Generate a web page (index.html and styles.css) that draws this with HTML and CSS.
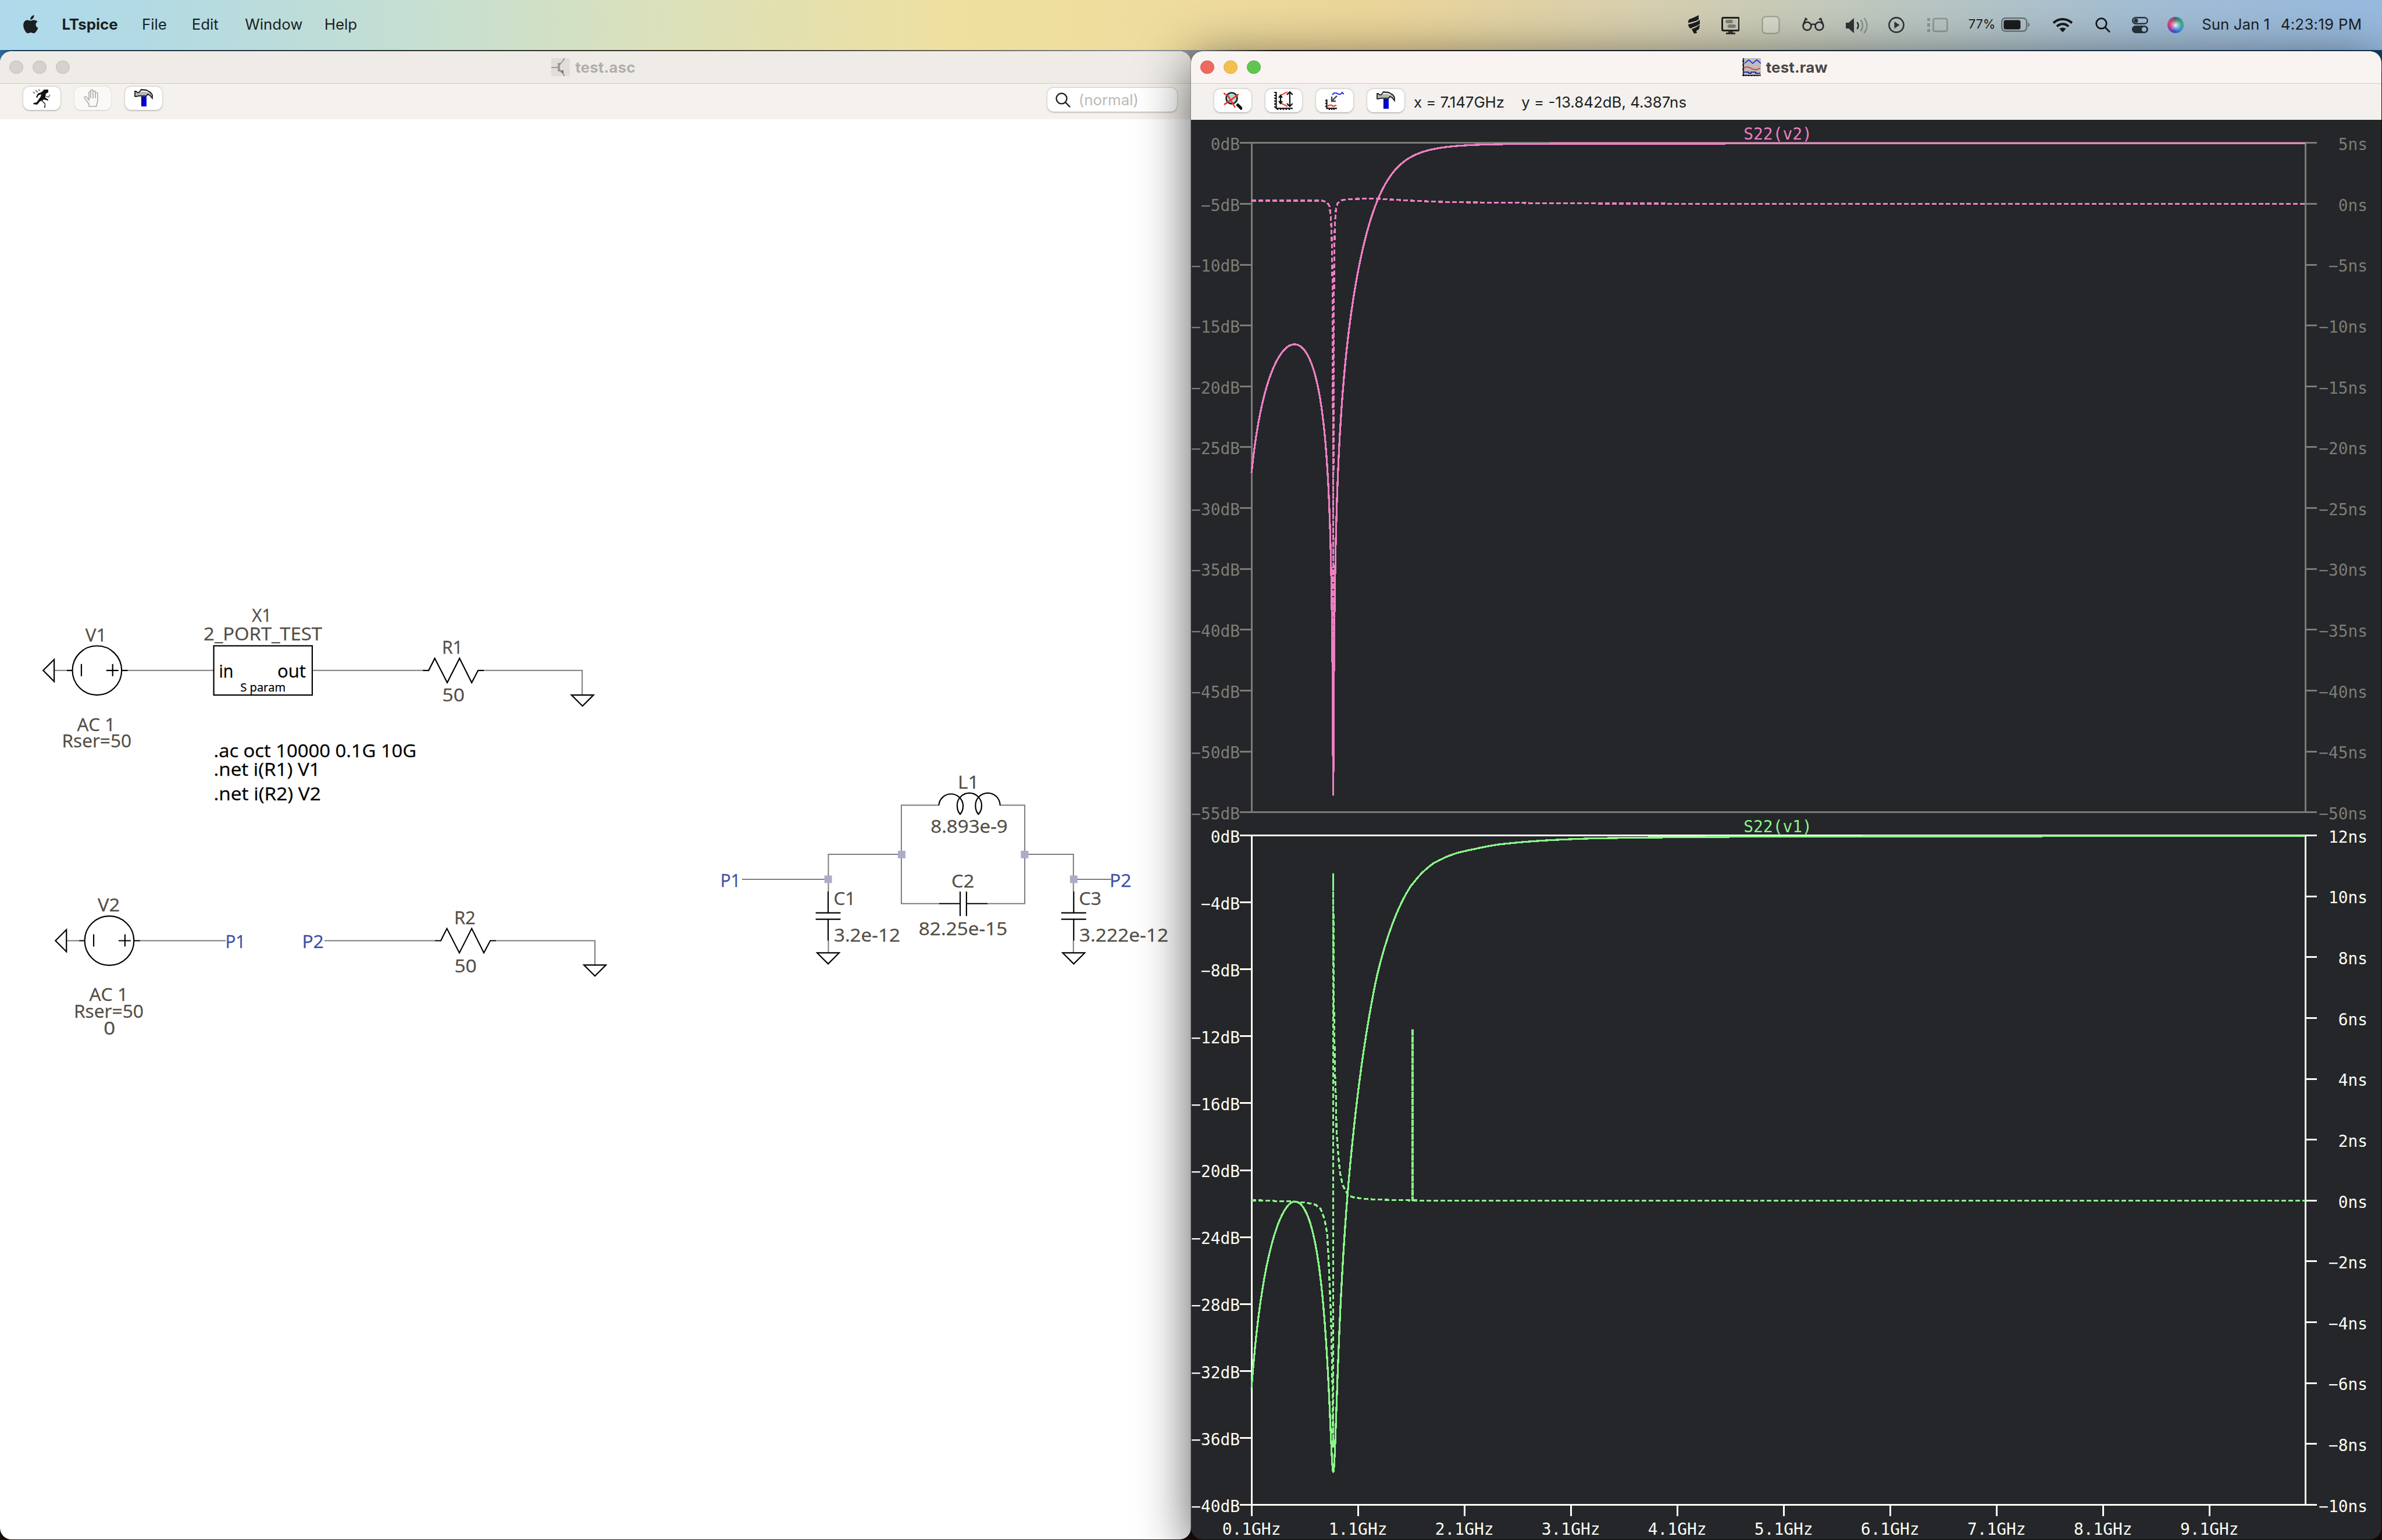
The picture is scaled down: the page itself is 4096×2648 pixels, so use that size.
FILE: index.html
```html
<!DOCTYPE html>
<html lang="en">
<head>
<meta charset="utf-8">
<title>LTspice</title>
<link rel="stylesheet" href="styles.css">
</head>
<body>
<div class="screen">
  <header class="menubar">
    <nav class="menus">
      <svg class="apple" viewBox="0 0 26 32"><path d="M18.6 0c.3 2.400-.7 4.400-2 5.800-1.300 1.500-3 2.300-4.400 2.100-.2-2.200.7-4.200 1.900-5.500C15.400 1 17.200.1 18.600 0zM24.800 11c-2 1.200-3.200 2.900-3.200 5.200 0 2.700 1.600 4.700 4 5.600-.6 1.900-1.600 3.900-2.900 5.800-1.300 1.900-2.600 3.700-4.700 3.700-2 0-2.600-1.200-4.900-1.200-2.300 0-3 1.200-4.900 1.300-2 .1-3.500-2-4.800-3.900C.6 23.400-1.200 16.600 1.300 12.200c1.300-2.200 3.500-3.600 6-3.600 2 0 3.700 1.300 5 1.300 1.200 0 3.300-1.500 5.900-1.300 2.600.1 4.900 1.100 6.600 2.400z"/></svg>
      <span class="m m-app">LTspice</span><span class="m m-file">File</span><span class="m m-edit">Edit</span><span class="m m-window">Window</span><span class="m m-help">Help</span>
    </nav>
    <div class="status">
      <svg class="s-flag" viewBox="0 0 26 32"><path fill="#1b1c1e" d="M4 7C10 5 15 3 20 0v7.500C15 10.500 10 11.500 2 13.500c0-2 0-5 2-6.500zM2 16c8-2 15-4 20-8v7c-4 4-11 5-16 8-2-1-4-4-4-7zM8 24c6-2 10-4 14-7.500l-1 6.500c-1 3-4 3-5 4l1 4-5 1c-1-3-3-5-4-8z"/></svg>
      <svg class="s-monitor" viewBox="0 0 32 30"><rect x="1.500" y="1.500" width="29" height="22" rx="2" fill="none" stroke="#222" stroke-width="3"/><rect x="7" y="5" width="14" height="6" rx="3" fill="#7d7f76"/><rect x="19" y="5" width="6" height="6" rx="3" fill="#bfc1b5"/><rect x="7" y="13" width="6" height="6" rx="3" fill="#bfc1b5"/><rect x="11" y="13" width="14" height="6" rx="3" fill="#7d7f76"/><path d="M12 24h8v3h4v3H8v-3h4z" fill="#333"/></svg>
      <svg class="s-box" viewBox="0 0 32 32"><rect x="1.500" y="1.500" width="29" height="29" rx="6" fill="#fff" fill-opacity=".25" stroke="#000" stroke-opacity=".25" stroke-width="2"/></svg>
      <svg class="s-glasses" viewBox="0 0 38 24" fill="none" stroke="#2a2d2e" stroke-width="2.600"><circle cx="8.500" cy="15" r="7"/><circle cx="29.500" cy="15" r="7"/><path d="M15 13c2-2 6-2 8 0M2 12 6 2l3 2M36 12 32 2l-3 2"/></svg>
      <svg class="s-volume" viewBox="0 0 40 28" fill="none" stroke-width="2.600" stroke-linecap="round"><path d="M1 9h5l9-8v26l-9-8H1z" fill="#2f3334"/><path d="M21 9c2 3 2 7 0 10" stroke="#2f3334"/><path d="M27 5c4 5 4 13 0 18M33 2c6 7 6 17 0 24" stroke="#2f3334" stroke-opacity=".35"/></svg>
      <svg class="s-play" viewBox="0 0 28 28"><circle cx="14" cy="14" r="12.600" fill="none" stroke="#2f3436" stroke-width="2.600"/><path d="M10.500 8v12l9-6z" fill="#2f3436"/></svg>
      <svg class="s-stage" viewBox="0 0 36 26" opacity=".28"><rect x="10.500" y="2" width="24" height="22" rx="3" fill="none" stroke="#222" stroke-width="2.600"/><path d="M0 1h5v5H0zM0 10h5v6H0zM0 20h5v5H0z" fill="#222"/></svg>
      <span class="percent">77%</span>
      <svg class="s-battery" viewBox="0 0 50 26"><rect x="1.200" y="1.200" width="43" height="22.600" rx="6.500" fill="none" stroke="#1b1c1e" stroke-opacity=".5" stroke-width="2.200"/><rect x="4.500" y="4.500" width="29" height="16" rx="3.500" fill="#1b1c1e"/><path d="M46.500 8.500c3.500 1.300 3.500 6.700 0 8z" fill="#1b1c1e" fill-opacity=".5"/></svg>
      <svg class="s-wifi" viewBox="0 0 36 26" fill="none" stroke="#15181a" stroke-width="4"><path d="M2 9.500C11 .8 25 .8 34 9.500M8 15.500c6-5.500 14-5.500 20 0"/><path d="M18 25.500l-5.500-6c3-2.700 8-2.700 11 0z" fill="#15181a" stroke="none"/></svg>
      <svg class="s-search" viewBox="0 0 26 26" fill="none" stroke="#15181a" stroke-width="2.800" stroke-linecap="round"><circle cx="10.500" cy="10.500" r="8.800"/><path d="M17 17l7.200 7.500"/></svg>
      <svg class="s-control" viewBox="0 0 28 28"><rect x="1.200" y="1.200" width="25.600" height="10.600" rx="5.300" fill="none" stroke="#27323a" stroke-width="2.400"/><circle cx="7" cy="6.500" r="3.600" fill="#27323a"/><rect y="15" width="28" height="13" rx="6.500" fill="#27323a"/><circle cx="21" cy="21.500" r="4" fill="#a5bfd6"/></svg>
      <span class="siri"></span>
      <span class="date">Sun Jan 1</span><span class="clock">4:23:19 PM</span>
    </div>
  </header>
  <main class="desktop">
    <section class="window schematic">
      <div class="titlebar">
        <div class="lights"><i></i><i></i><i></i></div>
        <div class="title">
          <svg class="doc" viewBox="0 0 32 32"><path fill="#e0ddda" d="M0 0h32v32H0z"/><path d="M0 16h12M12 9v13h2V9zM14 12l8-10V0M14 19l8 10v3" fill="none" stroke="#8a8885" stroke-width="1.500"/><path fill="#777" d="M15 23l6-3v7z"/></svg>
          <span>test.asc</span>
        </div>
      </div>
      <div class="toolbar">
        <button class="tool"><svg viewBox="0 0 32 32"><path d="M20 1h7v5l-4 2-1 7 5 3v2l-8-2-3 3 5 5-1 6h2v-7l-5-5-4 1-5 6-7-1 1-2 5-1 7-10 1-4-5 2-2 4-2-1 3-6 7-3z" fill="#111"/><path d="M23 13l5 1 2-4M1 5l3 3M5 2l4 4M10 1l3 2" fill="none" stroke="#777" stroke-width="1.800"/></svg></button>
        <button class="tool off"><svg viewBox="0 0 32 32" fill="none" stroke="#b5b4b2" stroke-width="1.800"><path d="M10 30v-4l-8-11c0-2 3-3 5 0l3 4V6c0-2 3-2 3 0V3c0-2 4-2 4 0v2c0-2 4-2 4 0v3c0-2 4-2 4 0v14l-2 5v3zM13 6v10M17 5v11M21 8v8"/></svg></button>
        <button class="tool"><svg viewBox="0 0 32 32"><path d="M12 13h9v17h-9z" fill="#00d"/><path d="M12 13h3v9h-1v8h-2z" fill="#009"/><path d="M1 4h2l2 2h3l4-5 9 1 7 4 3 4v6l-4-5-4-2-2 3h-9L7 12l-3 1H1z" fill="#b5b5b5" stroke="#1a1a1a" stroke-width="1.800"/><path d="M11 4h9l4 2" stroke="#eee" stroke-width="2" fill="none"/></svg></button>
        <div class="find"><svg viewBox="0 0 26 26" fill="none" stroke="#222" stroke-width="2.400" stroke-linecap="round"><circle cx="10.500" cy="10.500" r="9"/><path d="M17 17l7.500 7.500"/></svg><span>(normal)</span></div>
      </div>
      <svg class="canvas" id="sheet" viewBox="0 206 2056 2451"></svg>
    </section>
    <section class="window waveform">
      <div class="titlebar">
        <div class="lights on"><i></i><i></i><i></i></div>
        <div class="title">
          <svg class="doc" viewBox="0 0 32 32" fill="none"><path fill="#bdbdbd" d="M0 0h32v32H0z"/><path d="M2 0v32M0 29.500h32M0 5h2M0 12h2M0 19h2M6 29v3M11 29v3M16 29v3M21 29v3M26 29v3" stroke="#000" stroke-width="1.500"/><path d="M4 9l7-6 7 6 7-6 7 6" stroke="#11e" stroke-width="1.500"/><path d="M3 17l4-2 5 1 6 3 7 1 6-3" stroke="#e21" stroke-width="1.500"/><path d="M3 24h8v2h4v-2h8v2h8" stroke="#009" stroke-width="1.500"/></svg>
          <span>test.raw</span>
        </div>
      </div>
      <div class="toolbar">
        <button class="tool"><svg viewBox="0 0 32 32"><circle cx="14" cy="12" r="9.500" fill="#9be4e8" stroke="#222" stroke-width="2.600"/><path d="M15 5l6 5-8 9-5-4z" fill="#c9c9c9"/><path d="M23 22l9 9" stroke="#111" stroke-width="5"/><path d="M0 3l8 5 12 20M26 5L14 14 1 23" stroke="#ee3224" stroke-width="2.600" fill="none"/></svg></button>
        <button class="tool"><svg viewBox="0 0 32 32" fill="none"><path d="M3.500 1v28.500H32M0 2h3M0 7h3M0 12h3M0 17h3M0 22h3M0 27h3M6 29v4M11 29v4M16 29v4M21 29v4M26 29v4" stroke="#111" stroke-width="2.200"/><path d="M11 7l12-6M11 20l12 6" stroke="#f04a35" stroke-width="2.200"/><path d="M11 8v12M8 11l3-4 3 4M8 17l3 4 3-4M27 1v25M22 6l5-5 5 5M22 21l5 5 5-5" stroke="#111" stroke-width="2.200"/></svg></button>
        <button class="tool"><svg viewBox="0 0 32 32" fill="none"><path d="M12 6l3-3h4l4 2h3l3-3 3 3" stroke="#3333f5" stroke-width="2.200"/><path d="M20 8l-9 9M11 9v8h7" stroke="#444" stroke-width="2.400"/><path d="M2.500 14v15.500H20M0 16h3M0 21h3M0 26h3M7 29v3M11 29v3M15 29v3" stroke="#111" stroke-width="2.200"/><path d="M3 26l4-2h4l3 2 5-2" stroke="#f04a35" stroke-width="2.400"/></svg></button>
        <button class="tool"><svg viewBox="0 0 32 32"><path d="M12 13h9v17h-9z" fill="#00d"/><path d="M12 13h3v9h-1v8h-2z" fill="#009"/><path d="M1 4h2l2 2h3l4-5 9 1 7 4 3 4v6l-4-5-4-2-2 3h-9L7 12l-3 1H1z" fill="#b5b5b5" stroke="#1a1a1a" stroke-width="1.800"/><path d="M11 4h9l4 2" stroke="#eee" stroke-width="2" fill="none"/></svg></button>
        <span class="read-x">x = 7.147GHz</span><span class="read-y">y = -13.842dB, 4.387ns</span>
      </div>
      <svg class="canvas" id="plots" viewBox="2056 207 2055 2450"></svg>
    </section>
  </main>
</div>
<script src="script.js"></script>
</body>
</html>
```
FILE: styles.css
```css
* { box-sizing: border-box; }
html, body { margin: 0; height: 100%; overflow: hidden; background: #10131a; }
.screen {
  width: 4112px; height: 2658px; zoom: 0.99611;
  display: flex; flex-direction: column; overflow: hidden;
  font-family: Inter, "Liberation Sans", sans-serif; font-size: 26px; color: #1b1f22;
  background: linear-gradient(180deg, #0b1420 0, #0b1420 2500px, #1a0e0a 2658px);
}
.screen svg { display: block; flex: none; }
.screen span { white-space: nowrap; }

/* menu bar */
.menubar {
  height: 86px; flex: none; display: flex; justify-content: space-between; align-items: flex-start;
  background: linear-gradient(90deg, #aedaec 0, #b2dae4 240px, #c6dfd1 740px, #dae1bb 1130px, #efe0a0 1650px, #efdf9f 1800px, #ebd59a 2400px, #d6cfb0 2860px, #b6c5c4 3360px, #a3bdd4 3700px, #97b9de 4112px);
}
.menus, .status { display: flex; align-items: flex-start; line-height: 32px; padding-top: 26px; }
.menus { padding-left: 40px; }
.apple { width: 26px; height: 32px; margin-right: 41px; fill: #1b1f22; }
.m { flex: none; }
.m-app { width: 138px; font-weight: 700; }
.m-file { width: 86px; }
.m-edit { width: 92px; }
.m-window { width: 137px; }
.s-flag { width: 26px; height: 32px; margin-right: 33px; }
.s-monitor { width: 32px; height: 30px; margin: 3px 38px 0 0; }
.s-box { width: 32px; height: 32px; margin: 1px 38px 0 0; }
.s-glasses { width: 38px; height: 24px; margin: 4px 36px 0 0; }
.s-volume { width: 40px; height: 28px; margin: 4px 35px 0 0; }
.s-play { width: 28px; height: 28px; margin: 3px 39px 0 0; }
.s-stage { width: 36px; height: 26px; margin: 4px 35px 0 0; }
.percent { width: 56px; font-size: 22px; letter-spacing: -.2px; }
.s-battery { width: 50px; height: 26px; margin: 4px 39px 0 0; }
.s-wifi { width: 36px; height: 26px; margin: 4px 38px 0 0; }
.s-search { width: 26px; height: 26px; margin: 4px 37px 0 0; }
.s-control { width: 28px; height: 28px; margin: 3px 34px 0 0; }
.siri {
  width: 28px; height: 28px; margin: 3px 31px 0 0; border-radius: 50%; flex: none;
  background: radial-gradient(circle at 50% 52%, #fff 0, rgba(255,255,255,.5) 22%, transparent 50%),
    conic-gradient(#3a7a78, #3bb08a 70deg, #3f9be0 130deg, #2c5fd0 190deg, #b03ab0 240deg, #e2457a 290deg, #6b5a72);
}
.date { width: 136px; }
.clock { width: 175px; letter-spacing: .25px; }

/* windows */
.desktop { flex: 1; display: flex; padding-top: 2px; min-height: 0; background: linear-gradient(90deg, #2f6a9a 0, #16324c 30px, #3a3020 1200px, #8f9499 2040px, #8f9499 2070px, #1b1b1b 2200px, #14406c 4112px); background-size: 100% 40px; background-repeat: no-repeat; }
.window { display: flex; flex-direction: column; height: 2569px; border-radius: 20px; overflow: hidden; position: relative; }
.schematic { width: 2056px; background: #fff; }
.waveform { width: 2055px; background: #242629; box-shadow: 0 20px 90px rgba(0,0,0,.65), 0 0 2px rgba(0,0,0,.6); }
.titlebar { height: 57px; flex: none; display: flex; align-items: center; border-bottom: 2px solid #cfccc9; background: #efece7; position: relative; }
.waveform .titlebar { background: #f9f4f1; }
.lights { display: flex; gap: 16px; padding-left: 16px; flex: 1; }
.lights i { width: 24px; height: 24px; border-radius: 50%; background: #d5d1cd; border: 1.500px solid #c1bdb9; }
.lights.on i:nth-child(1) { background: #ed6a5e; border-color: #d9574c; }
.lights.on i:nth-child(2) { background: #f5bf4f; border-color: #dfa63e; }
.lights.on i:nth-child(3) { background: #61c554; border-color: #4fae43; }
.title { display: flex; align-items: center; gap: 9px; font-weight: 700; color: #b1aeab; line-height: 32px; letter-spacing: .2px; }
.schematic .title { width: 1104px; }
.waveform .title { width: 1103.500px; color: #4a4745; }
.doc { width: 32px; height: 32px; }
.toolbar { height: 61px; flex: none; display: flex; align-items: flex-start; padding: 5px 0 0 40px; background: #f5f2ed; }
.waveform .toolbar { height: 62px; padding-top: 9px; background: #f3f0ed; }
.tool { width: 64px; height: 40px; margin: 0 24px 0 0; padding: 4px 16px; border: 0; border-radius: 11px; background: #fff; box-shadow: 0 1px 3px rgba(0,0,0,.35); flex: none; }
.tool svg { width: 32px; height: 32px; }
.tool.off { background: #faf9f7; box-shadow: 0 1px 3px rgba(0,0,0,.15); }
.find { width: 224px; height: 41px; margin: 2px 24px 0 auto; border-radius: 11px; background: #fff; box-shadow: 0 1px 3px rgba(0,0,0,.35); display: flex; align-items: center; padding-left: 14px; gap: 14px; color: #bcbab8; }
.find svg { width: 26px; height: 26px; }
.read-x { width: 186px; margin-left: -7.500px; line-height: 46px; letter-spacing: -.1px; }
.read-y { line-height: 46px; }
.canvas { width: 100%; flex: 1 1 0 !important; min-height: 0; }

/* schematic sheet */
.wire { fill: none; stroke: #7d7d7d; stroke-width: 2; }
.part { fill: none; stroke: #000; stroke-width: 2.200; }
.node { fill: #aaacc8; }
.label { font: 31px "Open Sans", "Noto Sans", sans-serif; fill: #524d45; stroke: #524d45; stroke-width: .3; }
.net { fill: #3c4ea6; stroke: #3c4ea6; }
.directive { fill: #000; stroke: #000; }
.small { font-size: 20px; }

/* plots */
.axis { fill: none; stroke-width: 3; shape-rendering: crispEdges; }
.trace { fill: none; stroke-width: 3.300; shape-rendering: crispEdges; stroke-linejoin: round; }
.dash { stroke-dasharray: 8 4; }
.spike { stroke-dasharray: 11 1; }
.tick { font: 28px "DejaVu Sans Mono", monospace; }
```
FILE: script.js
```js
const make = (host, tag, attrs, text) => {
  const el = document.createElementNS('http://www.w3.org/2000/svg', tag);
  for (const k in attrs) el.setAttribute(k, attrs[k]);
  if (text !== undefined) el.textContent = text;
  host.appendChild(el);
  return el;
};

/* ---- schematic ---- */
const sheet = document.getElementById('sheet');
const wire = d => make(sheet, 'path', { class: 'wire', d });
const part = d => make(sheet, 'path', { class: 'part', d });

wire('M94 1157.500H116M220 1157.500H369M540 1157.500H730M835 1157.500H1005V1200');
wire('M115 1624H137M241 1624H390M560 1624H751M856 1624H1027V1666');
wire('M1281 1518H1430M1430 1539V1475H1556M1621 1390H1556V1560H1621M1705 1560H1769V1390H1726M1769 1475H1853V1539M1853 1518H1918M1430 1624V1645M1853 1624V1645');

/* voltage source with its ground, centred on the circle */
const source = (x, y) => {
  part(`M${x - 93} ${y}l19 -19v38zM${x - 52} ${y}h10M${x + 42} ${y}h11M${x - 27} ${y - 11}v21M${x + 27} ${y - 11}v21M${x + 16} ${y}h21`);
  make(sheet, 'circle', { class: 'part', cx: x, cy: y, r: 42.5 });
};
source(167.5, 1157.5); source(188.7, 1624);
const resistor = (x, y) => part(`M${x} ${y}h10l10.500 -21l21.500 42l21.300 -42l21 42l11 -21h10`);
resistor(730, 1157.5); resistor(751, 1624);
const ground = (x, y) => part(`M${x - 19} ${y}h38l-19 19z`);
ground(1005.5, 1200); ground(1027, 1666); ground(1429.6, 1645); ground(1853.5, 1645);
const capacitor = x => part(`M${x} 1539V1576M${x - 21.5} 1576h43M${x - 21.500} 1587h43M${x} 1587V1624`);
capacitor(1429.6); capacitor(1853.5);
part('M1621 1560H1657.500M1657.500 1539.300V1581.700M1668.400 1539.300V1581.700M1668.400 1560H1705');
part('M1620.700 1390.300A21 21 0 0 1 1662.600 1390.300Q1662.600 1400 1657.500 1405.700Q1652.300 1400 1652.300 1390.300A21 21 0 0 1 1694.600 1390.300Q1694.600 1400 1689 1405.700Q1683.900 1400 1683.900 1390.300A21.200 21.200 0 0 1 1726.400 1390.300');
make(sheet, 'rect', { class: 'part', x: 369, y: 1115, width: 170, height: 85 });
for (const [x, y] of [[1429.6, 1518], [1556.5, 1475.3], [1768.8, 1475.3], [1853.5, 1518]])
  make(sheet, 'rect', { class: 'node', x: x - 6.5, y: y - 6.5, width: 13, height: 13 });

/* text, left edge, right edge, baseline, extra class */
const labels = [
  ['V1', 147.4, 184, 1107.7], ['X1', 435, 469, 1073.7], ['2_PORT_TEST', 351.5, 556, 1106],
  ['R1', 763, 799, 1128.7], ['50', 763.5, 802, 1211], ['AC 1', 133, 199, 1261.7], ['Rser=50', 107, 227, 1290.7],
  ['.ac oct 10000 0.1G 10G', 369, 719, 1307.7, 'directive'], ['.net i(R1) V1', 369, 553, 1339.3, 'directive'],
  ['.net i(R2) V2', 369, 554, 1381.7, 'directive'], ['in', 378, 403, 1169.5, 'directive'], ['out', 479, 528, 1169.5, 'directive'],
  ['S param', 415, 493, 1194.3, 'directive small'],
  ['V2', 168.7, 207, 1573.7], ['P1', 389, 424, 1636.7, 'net'], ['P2', 521.5, 559, 1636.7, 'net'],
  ['R2', 784, 821, 1595], ['50', 784.5, 823, 1678.3], ['AC 1', 154, 221, 1728], ['Rser=50', 127.5, 248, 1756.7], ['0', 179, 199, 1786],
  ['P1', 1243.5, 1278.5, 1530.7, 'net'], ['P2', 1915.5, 1953, 1530.7, 'net'], ['L1', 1653.5, 1690, 1361.7],
  ['8.893e-9', 1606.5, 1739.5, 1437.7], ['C2', 1642.5, 1682, 1531.7], ['82.25e-15', 1586, 1739, 1614],
  ['C1', 1439, 1477, 1562], ['3.2e-12', 1439.5, 1554, 1626], ['C3', 1862.5, 1901.5, 1562], ['3.222e-12', 1863, 2017, 1626]
];
for (const [t, a, b, y, c] of labels)
  make(sheet, 'text', { class: 'label ' + (c || ''), x: a, y, textLength: b - a, lengthAdjust: 'spacingAndGlyphs' }, t);

/* ---- waveforms ---- */
const plots = document.getElementById('plots');
const X0 = 2160.5, X1 = 3979.5, GHZ = (X1 - X0) / 9.9;
const fx = f => X0 + (f - 0.1) * GHZ;

const pane = (top, bottom, color, left, right, title, titleColor) => {
  make(plots, 'path', { class: 'axis', stroke: color, d: `M${X0} ${top}V${bottom}M${X1} ${top}V${bottom}M2140 ${top}H4000M2140 ${bottom}H4000` });
  const put = (list, x1, x2, tx) => list.forEach((t, i) => {
    const y = top + (bottom - top) * i / (list.length - 1);
    make(plots, 'path', { class: 'axis', stroke: color, d: `M${x1} ${y}H${x2}` });
    make(plots, 'text', { class: 'tick', fill: color, x: tx, y: y + 12.300, 'text-anchor': 'end' }, t);
  });
  put(left, 2140, X0, 2140.5);
  put(right, X1, 4000, 4087);
  make(plots, 'text', { class: 'tick', fill: titleColor, x: 3069, y: top - 6, 'text-anchor': 'middle' }, title);
};
const range = (a, b, s, u) => { const r = []; for (let v = a; v >= b; v -= s) r.push((v < 0 ? '−' + -v : v) + u); return r; };
const PINK = '#ee7fc3', GREEN = '#8af78a', GREY = '#7b7c78', WHITE = '#fdfdf6';
pane(247, 1402.4, GREY, range(0, -55, 5, 'dB'), range(5, -50, 5, 'ns'), 'S22(v2)', PINK);
pane(1442.4, 2597.8, WHITE, range(0, -40, 4, 'dB'), range(12, -10, 2, 'ns'), 'S22(v1)', GREEN);
for (let i = 0; i < 10; i++) {
  const x = fx(0.1 + i);
  make(plots, 'path', { class: 'axis', stroke: WHITE, d: `M${x} 2598V2617.500` });
  make(plots, 'text', { class: 'tick', fill: WHITE, x, y: 2650, 'text-anchor': 'middle' }, i + '.1GHz');
}

/* reflection of the C1 / L1||C2 / C3 ladder between 50 ohm ports */
const numer = f => {
  const w = 2 * Math.PI * f * 1e9, L = 8.893e-9 / (1 - w * w * 8.893e-9 * 82.25e-15);
  return Math.abs(w * L / 50 - 50 * w * (6.422e-12 - w * w * L * 3.2e-12 * 3.222e-12));
};
const lerp = (t, x) => {
  let i = 1;
  while (i < t.length - 1 && t[i][0] < x) i++;
  const [a, p] = t[i - 1], [b, q] = t[i];
  return p + (q - p) * Math.min(1, Math.max(0, (x - a) / (b - a)));
};
const db = (n, floor) => 10 * Math.log10((n * n + floor * floor) / (4 + n * n));
const K = [[.1, .505], [.47, .535], [1.056, .55], [1.28, .585], [1.612, .541]];
const TAIL = [[1.612, 2.874], [1.698, 2.225], [1.807, 1.638], [1.928, 1.252], [2.025, 1.02], [2.196, .773], [2.414, .51], [2.657, .355], [2.9, .247], [3.308, .139], [4.1, .07], [5, .03], [7, .01], [10, .005]].map(([f, d]) => [f, Math.log(d)]);
const draw = (pts, color, cls) => make(plots, 'polyline', { class: 'trace ' + (cls || ''), stroke: color, points: pts.map(p => p.map(v => v.toFixed(2)).join()).join(' ') });
const pink = [], green = [];
for (let f = 0.1; f <= 10; f += f < 2 ? 0.002 : 0.01) {
  pink.push([fx(f), 248 - db(numer(f), .0042) * 21.007]);
  const g = f < 1.612 ? db(numer(f) * lerp(K, f), .0252 * Math.exp(-(((f - .866) / .1) ** 2))) : -Math.exp(lerp(TAIL, f));
  green.push([fx(f), 1443.4 - g * 28.885]);
}
draw(pink, PINK);
draw(green, GREEN);

/* group delay */
draw([[2160.5,346.4],[2282,346.4],[2291,349.5],[2295,356],[2297.3,374],[2298.7,401],[2299.5,432],[2300,468],[2300.5,512],[2301,600],[2301.300,900],[2301.500,1372],[2301.700,900],[2302.200,600],[2302.700,512],[2303.500,446],[2304,401],[2305,378],[2306.3,361],[2309,351],[2315.6,346],[2326.8,344.200],[2349,343.3],[2378,343.3],[2402.7,344.6],[2425,346],[2452,347.3],[2492,348.7],[2536.6,349.5],[2630,350.4],[2657,351.3],[2750,351.4],[3000,352],[3979,352.300]], PINK, 'dash');
draw([[2160.5,2072.2],[2197,2072.6],[2202,2073.8],[2228.6,2073.9],[2255.4,2076.4],[2271,2079.7],[2280,2087.3],[2286.6,2105],[2291,2130],[2293.3,2168],[2295,2210],[2296.400,2243],[2297.8,2277],[2298.7,2319],[2300,2378],[2301,2461],[2301.3,2499],[2301.6,1509],[2302.3,1718.700],[2303.6,1785.7],[2304.1,1830.4],[2305,1866],[2306.3,1897],[2307.1,1950],[2310.7,2000],[2313.4,2025],[2317.9,2046],[2326.8,2063],[2335.7,2067],[2358,2070],[2407,2071.8],[2437.5,2072.2],[2458.5,2072.6],[3979,2072.6]], GREEN, 'dash');
draw([[2438.4,1777],[2438.4,2073.4]], GREEN, 'spike');
```
